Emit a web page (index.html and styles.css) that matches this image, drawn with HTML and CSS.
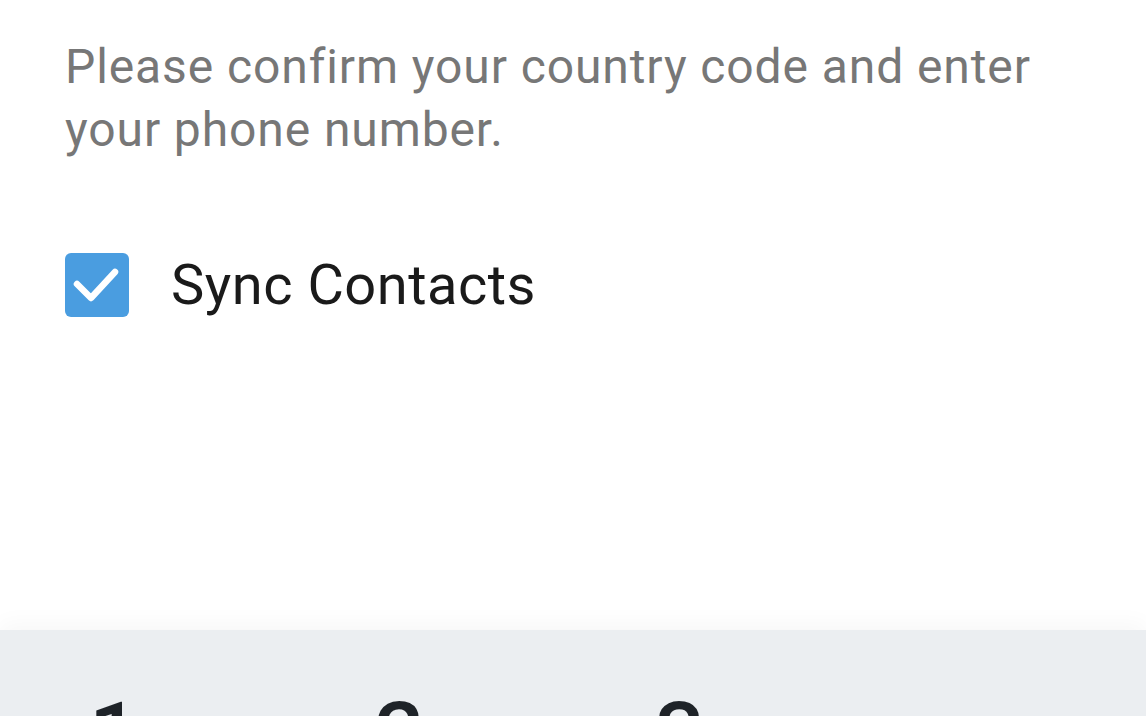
FILE: index.html
```html
<!DOCTYPE html>
<html lang="en">
<head>
<meta charset="utf-8">
<title>Your phone</title>
<link rel="stylesheet" href="styles.css">
</head>
<body>
<div class="page">
  <main class="content">
    <p class="hint">Please confirm your country code and enter your phone number.</p>
    <label class="sync">
      <span class="box">
        <svg width="64" height="64" viewBox="0 0 64 64"><path d="M12 31 L26 45 L50 19" fill="none" stroke="#fff" stroke-width="6.5" stroke-linecap="round" stroke-linejoin="round"/></svg>
      </span>
      <span class="sync-label">Sync Contacts</span>
    </label>
  </main>
  <section class="keypad">
    <div class="key key-1"><span class="digit">1</span></div>
    <div class="key key-2"><span class="digit">2</span><span class="letters">ABC</span></div>
    <div class="key key-3"><span class="digit">3</span><span class="letters">DEF</span></div>
    <div class="key"></div>
  </section>
</div>
</body>
</html>
```

FILE: styles.css
```css
html, body {
  margin: 0;
  padding: 0;
  background: #ffffff;
  overflow: hidden;
}
body {
  font-family: Roboto, "Liberation Sans", sans-serif;
}
.page {
  width: 1146px;
  height: 716px;
  display: flex;
  flex-direction: column;
  overflow: hidden;
}
.content {
  height: 630px;
  flex: none;
  padding: 35px 0 0 65px;
  box-sizing: border-box;
}
.hint {
  margin: 0;
  width: 1010px;
  font-size: 48px;
  line-height: 63px;
  letter-spacing: 0.9px;
  color: #777777;
}
.sync {
  display: flex;
  align-items: center;
  gap: 42px;
  margin-top: 92px;
}
.box {
  width: 64px;
  height: 64px;
  border-radius: 6px;
  background: #4a9de0;
  display: block;
  flex: none;
}
.box svg {
  display: block;
}
.sync-label {
  font-size: 56px;
  line-height: 64px;
  letter-spacing: 0.5px;
  color: #1a1a1a;
}
.keypad {
  flex: 1;
  background: #ebeef1;
  box-shadow: 0 -6px 22px rgba(0, 0, 0, 0.035);
  display: grid;
  grid-template-columns: repeat(4, 1fr);
  padding-top: 64px;
}
.key {
  display: flex;
  align-items: flex-start;
  gap: 16px;
}
.key-1 { padding-left: 89px; }
.key-2 { padding-left: 88px; }
.key-3 { padding-left: 82px; }
.digit {
  font-size: 88px;
  font-weight: 500;
  line-height: 80px;
  color: #1e2328;
}
.letters {
  font-size: 32px;
  line-height: 80px;
  color: #c0c4c8;
  letter-spacing: 2px;
  padding-top: 10px;
}
```
